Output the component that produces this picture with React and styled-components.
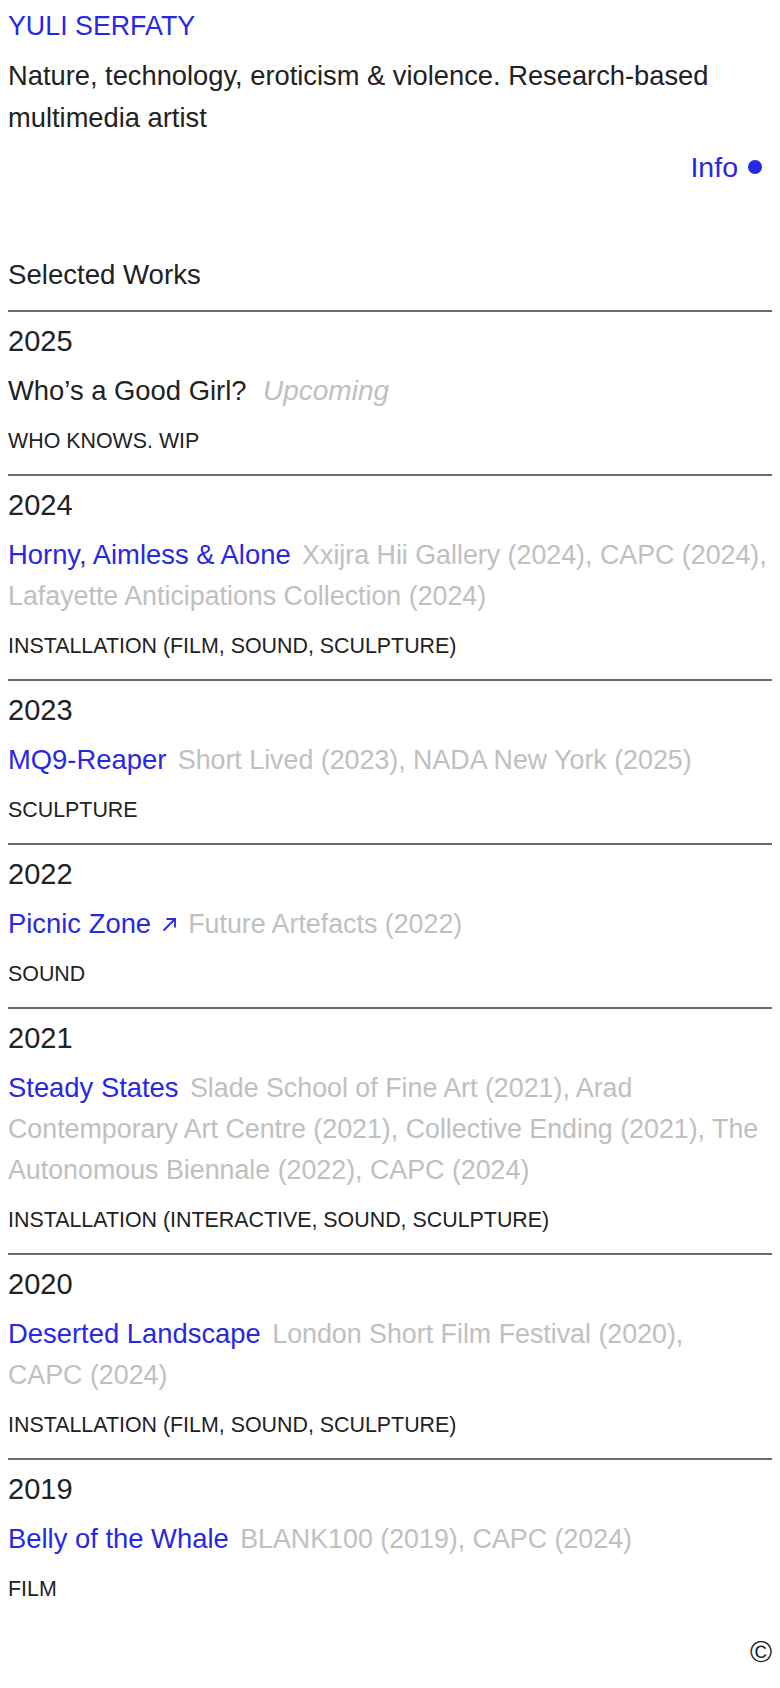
import React from "react";
import styled, { createGlobalStyle } from "styled-components";

const BLUE = "#2828e4";
const INK = "#222222";
const GRAY = "#c0c0c0";
const RULE = "#6b6b6b";

const GlobalStyle = createGlobalStyle`
  html, body {
    margin: 0;
    padding: 0;
    background: #ffffff;
  }
  body {
    font-family: "Liberation Sans", Arial, sans-serif;
    color: ${INK};
    -webkit-font-smoothing: antialiased;
  }
`;

const Page = styled.div`
  padding: 8px 8px 16px;
  box-sizing: border-box;
  min-height: 1688px;
  display: flex;
  flex-direction: column;
`;

const Header = styled.header`
  display: flex;
  flex-direction: column;
`;

const Name = styled.h1`
  margin: 0;
  font-size: 26.8px;
  line-height: 36px;
  font-weight: 400;
  color: ${BLUE};
`;

const Bio = styled.p`
  margin: 11px 0 0;
  font-size: 27.3px;
  line-height: 42px;
  font-weight: 400;
`;

const InfoRow = styled.div`
  margin-top: 10px;
  display: flex;
  justify-content: flex-end;
  align-items: center;
  gap: 10px;
  padding-right: 10px;
  font-size: 28.5px;
  line-height: 36px;
  color: ${BLUE};
`;

const Dot = styled.span`
  width: 14px;
  height: 14px;
  border-radius: 50%;
  background: ${BLUE};
  flex: none;
`;

const SectionTitle = styled.h2`
  margin: 70px 0 0;
  padding-bottom: 15px;
  font-size: 27.6px;
  line-height: 40px;
  font-weight: 400;
`;

const WorkList = styled.div`
  display: flex;
  flex-direction: column;
`;

const Work = styled.article`
  border-top: 2px solid ${RULE};
  padding: 9px 0 18px;
  display: flex;
  flex-direction: column;
`;

const Year = styled.div`
  font-size: 29px;
  line-height: 40px;
`;

const TitleLine = styled.p`
  margin: 10px 0 0;
  font-size: 26.8px;
  line-height: 41px;
`;

const WorkTitle = styled.span`
  font-size: 27.4px;
  line-height: 1;
  color: ${(p) => (p.$link ? BLUE : INK)};
`;

const Venues = styled.span`
  margin-left: ${(p) => (p.$italic ? "9px" : "4px")};
  line-height: 1;
  color: ${GRAY};
  font-style: ${(p) => (p.$italic ? "italic" : "normal")};
  font-size: ${(p) => (p.$italic ? "28px" : "26.8px")};
`;

const Category = styled.div`
  margin-top: 14px;
  font-size: 21.4px;
  line-height: 30px;
  text-transform: uppercase;
`;

const ArrowIcon = styled.svg`
  width: 15px;
  height: 15px;
  margin-left: 3px;
  vertical-align: 0.02em;
`;

const Footer = styled.footer`
  margin-top: 12px;
  display: flex;
  justify-content: flex-end;
  font-size: 30px;
  line-height: 36px;
`;

const works = [
  {
    year: "2025",
    title: "Who’s a Good Girl?",
    link: false,
    upcoming: true,
    category: "Who knows. WIP",
  },
  {
    year: "2024",
    title: "Horny, Aimless & Alone",
    link: true,
    venues: [
      "Xxijra Hii Gallery (2024)",
      "CAPC (2024)",
      "Lafayette Anticipations Collection (2024)",
    ],
    category: "Installation (Film, Sound, Sculpture)",
  },
  {
    year: "2023",
    title: "MQ9-Reaper",
    link: true,
    venues: ["Short Lived (2023)", "NADA New York (2025)"],
    category: "Sculpture",
  },
  {
    year: "2022",
    title: "Picnic Zone",
    link: true,
    external: true,
    venues: ["Future Artefacts (2022)"],
    category: "Sound",
  },
  {
    year: "2021",
    title: "Steady States",
    link: true,
    venues: [
      "Slade School of Fine Art (2021)",
      "Arad Contemporary Art Centre (2021)",
      "Collective Ending (2021)",
      "The Autonomous Biennale (2022)",
      "CAPC (2024)",
    ],
    category: "Installation (Interactive, Sound, Sculpture)",
  },
  {
    year: "2020",
    title: "Deserted Landscape",
    link: true,
    venues: ["London Short Film Festival (2020)", "CAPC (2024)"],
    category: "Installation (Film, Sound, Sculpture)",
  },
  {
    year: "2019",
    title: "Belly of the Whale",
    link: true,
    venues: ["BLANK100 (2019)", "CAPC (2024)"],
    category: "Film",
  },
];

// keep each venue's year glued to the last word of its name
const keepYear = (v) => v.replace(/ \(/, "\u00a0(");

function Arrow() {
  return (
    <ArrowIcon viewBox="0 0 15 15" fill="none" stroke={BLUE} strokeWidth="1.8">
      <path d="M1.5 13.5 L13 2" />
      <path d="M4.5 2 H13 V10.5" />
    </ArrowIcon>
  );
}

export default function App() {
  return (
    <>
      <GlobalStyle />
      <Page>
        <Header>
          <Name>YULI SERFATY</Name>
          <Bio>
            Nature, technology, eroticism &amp; violence. Research-based
            multimedia artist
          </Bio>
          <InfoRow>
            <span>Info</span>
            <Dot />
          </InfoRow>
        </Header>

        <SectionTitle>Selected Works</SectionTitle>

        <WorkList>
          {works.map((w) => (
            <Work key={w.year}>
              <Year>{w.year}</Year>
              <TitleLine>
                <WorkTitle $link={w.link}>
                  {w.title}
                  {w.external && (
                    <>
                      {" "}
                      <Arrow />
                    </>
                  )}
                </WorkTitle>{" "}
                {w.upcoming ? (
                  <Venues $italic>Upcoming</Venues>
                ) : (
                  <Venues>{w.venues.map(keepYear).join(", ")}</Venues>
                )}
              </TitleLine>
              <Category>{w.category}</Category>
            </Work>
          ))}
        </WorkList>

        <Footer>©</Footer>
      </Page>
    </>
  );
}
